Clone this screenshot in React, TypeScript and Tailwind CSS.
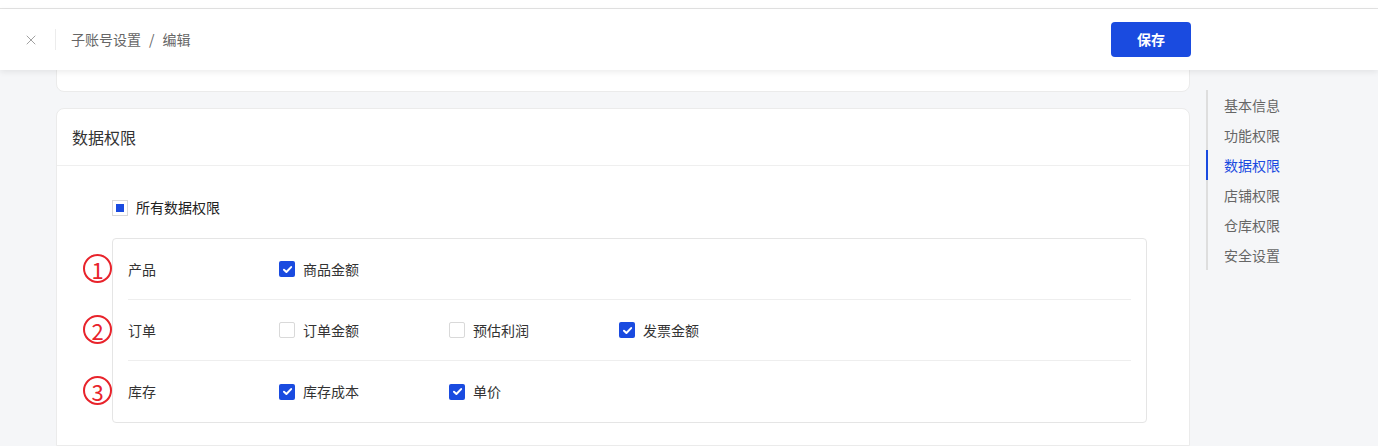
import React from "react";
import { X } from "lucide-react";

const font = { fontFamily: '"Noto Sans CJK SC", "Noto Sans", sans-serif' };

const navItems = ["基本信息", "功能权限", "数据权限", "店铺权限", "仓库权限", "安全设置"];

type Item = { label: string; checked: boolean };

const rows: { mark: string; label: string; items: Item[] }[] = [
  { mark: "1", label: "产品", items: [{ label: "商品金额", checked: true }] },
  {
    mark: "2",
    label: "订单",
    items: [
      { label: "订单金额", checked: false },
      { label: "预估利润", checked: false },
      { label: "发票金额", checked: true },
    ],
  },
  {
    mark: "3",
    label: "库存",
    items: [
      { label: "库存成本", checked: true },
      { label: "单价", checked: true },
    ],
  },
];

function Checkbox({ checked }: { checked: boolean }) {
  if (checked) {
    return (
      <span className="flex h-[16px] w-[16px] items-center justify-center rounded-[2px] bg-[#1a4be0]">
        <svg width="11" height="11" viewBox="0 0 10 10" fill="none">
          <path d="M1.8 5.2 4 7.3 8.3 2.8" stroke="white" strokeWidth="1.8" strokeLinecap="round" strokeLinejoin="round" />
        </svg>
      </span>
    );
  }
  return <span className="h-[16px] w-[16px] rounded-[2px] border border-[#d9d9d9] bg-white" />;
}

export default function App() {
  return (
    <div className="flex h-[446px] w-[1378px] flex-col overflow-hidden bg-[#f5f6f8]" style={font}>
      <div className="h-[9px] shrink-0 border-b border-[#e3e3e3] bg-white" />

      <header className="relative z-10 flex h-[61px] shrink-0 items-center bg-white pl-[23px] pr-[187px] shadow-[0_2px_6px_rgba(0,0,0,0.08)]">
        <X className="h-[16px] w-[16px] text-[#9a9a9a]" strokeWidth={1.4} />
        <div className="ml-[16px] h-[21px] w-px bg-[#ececec]" />
        <div className="ml-[15px] text-[14px] text-[#666]">
          子账号设置<span className="mx-[8px]">/</span>编辑
        </div>
        <button className="ml-auto h-[35px] w-[80px] rounded-[4px] bg-[#1a4be0] text-[14px] font-bold text-white">
          保存
        </button>
      </header>

      <div className="flex min-h-0 flex-1">
        <main className="ml-[56px] flex w-[1134px] flex-col">
          <div className="-mt-[12px] h-[34px] rounded-b-[8px] border border-[#ebebeb] bg-white" />

          <section className="mt-[16px] flex-1 rounded-t-[8px] border border-[#ebebeb] bg-white">
            <div className="flex h-[57px] items-center border-b border-[#efefef] pl-[15px] text-[16px] text-[#333]">
              数据权限
            </div>
            <div className="pl-[55px] pr-[42px] pt-[31px]">
              <div className="flex items-center gap-[8px]">
                <span className="flex h-[16px] w-[16px] items-center justify-center border border-[#d9d9d9] bg-white">
                  <span className="h-[8px] w-[8px] bg-[#1a4be0]" />
                </span>
                <span className="text-[14px] text-[#222]">所有数据权限</span>
              </div>

              <div className="mt-[20px] rounded-[4px] border border-[#e5e5e5] px-[15px]">
                {rows.map((row, i) => (
                  <div
                    key={row.label}
                    className={`relative flex h-[61px] items-center ${i < rows.length - 1 ? "border-b border-[#eeeeee]" : ""}`}
                  >
                    <span className="absolute -left-[45px] top-[15px] flex h-[29px] w-[29px] items-center justify-center rounded-full border-2 border-[#e8232b] text-[22px] leading-none text-[#e8232b]">
                      {row.mark}
                    </span>
                    <span className="w-[151px] text-[14px] text-[#333]">{row.label}</span>
                    {row.items.map((item) => (
                      <label key={item.label} className="flex w-[170px] items-center gap-[8px]">
                        <Checkbox checked={item.checked} />
                        <span className="text-[14px] text-[#333]">{item.label}</span>
                      </label>
                    ))}
                  </div>
                ))}
              </div>
            </div>
          </section>
        </main>

        <nav className="ml-[16px] mt-[20px] self-start border-l-2 border-[#dedede]">
          {navItems.map((item) => {
            const active = item === "数据权限";
            return (
              <div
                key={item}
                className={`-ml-[2px] flex h-[30px] items-center border-l-2 pl-[16px] text-[14px] ${
                  active ? "border-[#1a4be0] text-[#1a4be0]" : "border-transparent text-[#666]"
                }`}
              >
                {item}
              </div>
            );
          })}
        </nav>
      </div>
    </div>
  );
}
